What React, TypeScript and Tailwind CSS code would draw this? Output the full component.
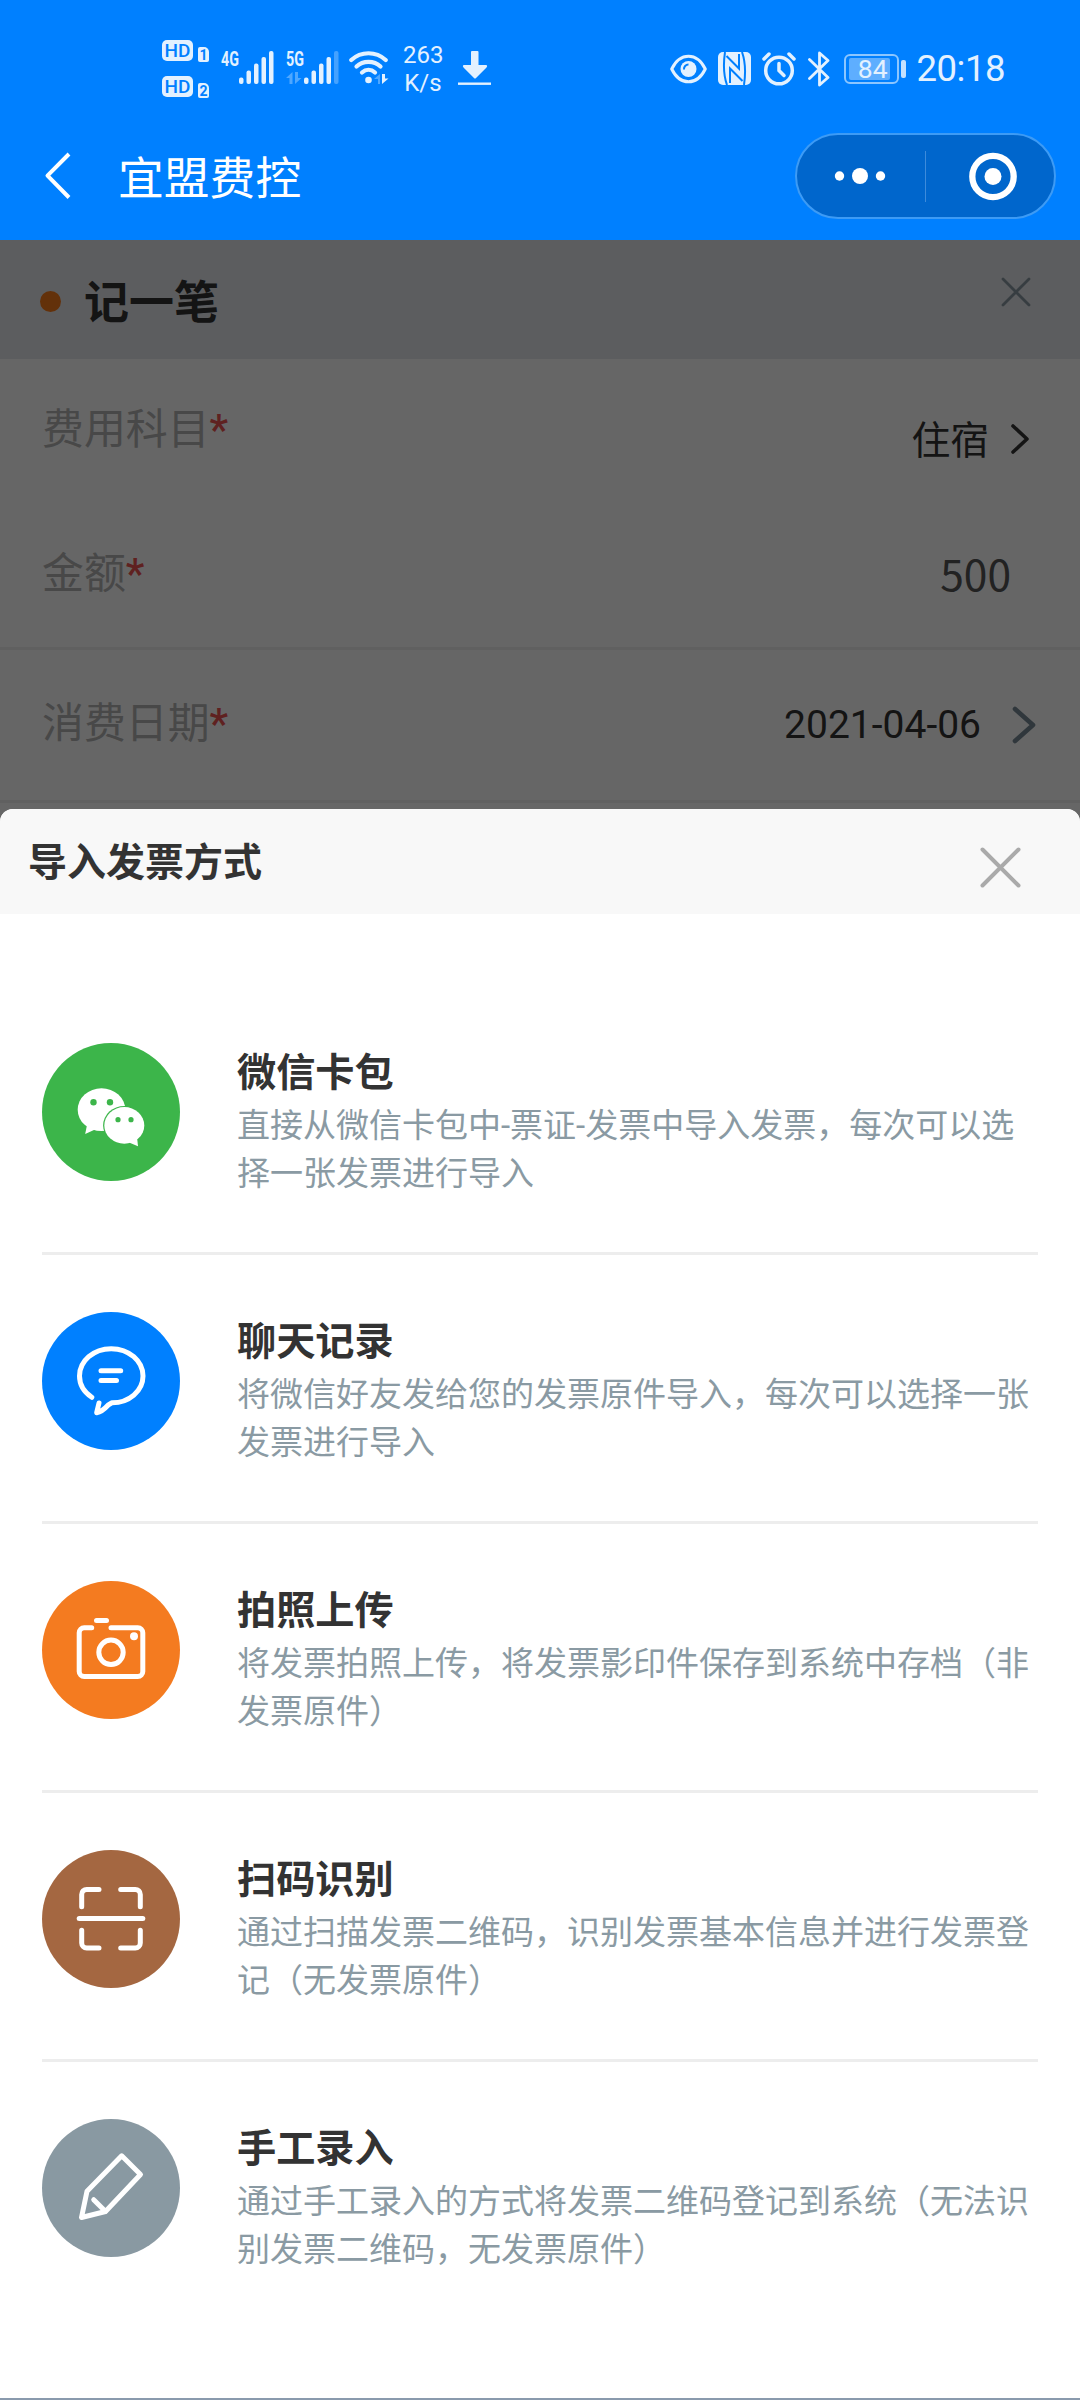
import type { ReactNode } from "react";

const textFont = "font-['Noto_Sans_CJK_SC',sans-serif]";
const numberFont = "font-['Roboto','Noto_Sans_CJK_SC',sans-serif]";

type ImportWay = {
  title: string;
  lines: string[];
  color: string;
  icon: ReactNode;
};

const importWays: ImportWay[] = [
  {
    title: "微信卡包",
    lines: ["直接从微信卡包中-票证-发票中导入发票，每次可以选", "择一张发票进行导入"],
    color: "bg-[#3cb54a]",
    icon: (
      <>
        <g fill="#fff" stroke="none">
          <ellipse cx="59.5" cy="66.7" rx="23.8" ry="21.4" />
          <path d="M45 82L43.2 91L53 86.5Z" />
        </g>
        <ellipse cx="82.3" cy="82.4" rx="21.2" ry="19.5" fill="#3cb54a" stroke="none" />
        <g fill="#fff" stroke="none">
          <ellipse cx="82.3" cy="82.4" rx="20" ry="18.3" />
          <path d="M95 94L96 103.2L87 99.5Z" />
        </g>
        <g fill="#3cb54a" stroke="none">
          <circle cx="51.5" cy="59.3" r="3.2" />
          <circle cx="68" cy="59.3" r="3.2" />
          <circle cx="76" cy="76.7" r="2.6" />
          <circle cx="89" cy="76.7" r="2.6" />
        </g>
      </>
    ),
  },
  {
    title: "聊天记录",
    lines: ["将微信好友发给您的发票原件导入，每次可以选择一张", "发票进行导入"],
    color: "bg-[#0080ff]",
    icon: (
      <>
        <path d="M49.8 85.3C42 80 37.5 72.5 37.5 64C37.5 49 51.5 36.7 69.2 36.7S101 49 101 64S87 91 69.7 90.8L66 93.2C62.5 97 58.5 100 54.7 100.7L57 91" />
        <path d="M59 58.7H78.7M59 68.4H74.5" />
      </>
    ),
  },
  {
    title: "拍照上传",
    lines: ["将发票拍照上传，将发票影印件保存到系统中存档（非", "发票原件）"],
    color: "bg-[#f47b20]",
    icon: (
      <>
        <path d="M49.7 46.7H42.2A5 5 0 0 0 37.2 51.7V90.5A5 5 0 0 0 42.2 95.5H95.8A5 5 0 0 0 100.8 90.5V51.7A5 5 0 0 0 95.8 46.7H69" />
        <path d="M54.5 39.4H64.5" />
        <circle cx="69" cy="71.3" r="12.2" />
        <circle cx="92" cy="55.3" r="4" fill="#fff" stroke="none" />
      </>
    ),
  },
  {
    title: "扫码识别",
    lines: ["通过扫描发票二维码，识别发票基本信息并进行发票登", "记（无发票原件）"],
    color: "bg-[#a46741]",
    icon: (
      <>
        <path d="M57 39.4H44.7A5 5 0 0 0 39.7 44.4V56.7M78.7 39.4H93.3A5 5 0 0 1 98.3 44.4V56.7" />
        <path d="M37.2 68.5H100.8" />
        <path d="M39.7 80.3V93A5 5 0 0 0 44.7 98H57M98.3 80.3V93A5 5 0 0 1 93.3 98H78.7" />
      </>
    ),
  },
  {
    title: "手工录入",
    lines: ["通过手工录入的方式将发票二维码登记到系统（无法识", "别发票二维码，无发票原件）"],
    color: "bg-[#8999a2]",
    icon: (
      <>
        <path d="M79.7 36.8L98.5 55.5L63.5 92.5L39.5 98.5L45 72.3Z" />
        <path d="M51.7 80.7L63.3 92.3" />
      </>
    ),
  },
];

const HdBadge = ({ sim }: { sim: string }) => (
  <div className="flex h-[21px] items-end gap-[5px]">
    <span className="flex h-[21px] w-[31px] items-center justify-center rounded-[5px] bg-[#e3f1ff] text-[19px] leading-none font-medium text-[#0080ff]">
      HD
    </span>
    <span className="-mb-px flex h-[15px] w-[11px] items-center justify-center rounded-[2px] rounded-tr-[5px] bg-[#e3f1ff] text-[14px] leading-none font-bold text-[#0080ff]">
      {sim}
    </span>
  </div>
);

const SignalBars = ({ weak = false }: { weak?: boolean }) => (
  <svg width="35" height="33" viewBox="0 0 35 33" fill="#e3f1ff">
    <rect x="0" y="26.5" width="4.5" height="6.5" rx="2" />
    <rect x="7.5" y="19.5" width="4.5" height="13.5" rx="2" />
    <rect x="15" y="12.5" width="4.5" height="20.5" rx="2" />
    <rect x="22.5" y="6" width="4.5" height="27" rx="2" />
    <rect x="30" y="0" width="4.5" height="33" rx="2" opacity={weak ? 0.3 : 1} />
  </svg>
);

const StatusBar = () => (
  <div className="flex h-[113px] items-start justify-between pt-10 pr-[75px] pl-[162px] font-['Roboto',sans-serif] text-[#e3f1ff]">
    {/* network - start */}
    <div className="flex items-start">
      <div className="flex flex-col gap-[15px]">
        <HdBadge sim="1" />
        <HdBadge sim="2" />
      </div>

      <div className="mt-[11px] ml-3 flex">
        <span className="-mt-px w-[18px] origin-left scale-x-[0.68] text-[21px] leading-[18px] font-bold">
          4G
        </span>
        <SignalBars />
      </div>

      <div className="mt-[11px] ml-3 flex">
        <div className="-mt-px w-[18px]">
          <span className="block w-[18px] origin-left scale-x-[0.68] text-[21px] leading-[18px] font-bold">
            5G
          </span>
          <svg width="16" height="12" viewBox="0 0 16 12" className="mt-1 opacity-35" fill="#e3f1ff">
            <path d="M0 6L6.5 0V12H3.5V6ZM15.5 6L9 12V0H12V6Z" />
          </svg>
        </div>
        <SignalBars weak />
      </div>

      <svg width="40" height="33" viewBox="0 0 40 33" className="mt-[11px] ml-[10px]" fill="none" stroke="#e3f1ff" strokeWidth="4.2" strokeLinecap="round">
        <path d="M2.3 9C12 0 27 0 36.7 9" />
        <path d="M7.5 15.5C14 9.3 25 9.3 31.5 15.5" />
        <path d="M13 21.5C17 17.8 22 17.8 26 21.5" />
        <circle cx="19.5" cy="29" r="3.3" fill="#e3f1ff" stroke="none" />
        <path d="M25 28L31 23V33H29V28Z" fill="#e3f1ff" stroke="none" opacity=".35" />
        <path d="M33 23V33L39.5 27.5H36V23Z" fill="#e3f1ff" stroke="none" />
      </svg>

      <div className="mt-px ml-[14px] w-[40px] text-center text-[24px] leading-7">
        <div>263</div>
        <div>K/s</div>
      </div>

      <svg width="34" height="34" viewBox="0 0 34 34" className="mt-[11px] ml-[15px]" fill="#e3f1ff">
        <path d="M14 0H19.5Q20.5 0 20.5 1V14H28Q30 14.5 28.5 16.5L18 27Q17 28 16 27L5.5 16.5Q4 14.5 6 14H13V1Q13 0 14 0Z" />
        <rect x="0" y="31.5" width="33" height="2.4" />
      </svg>
    </div>
    {/* network - end */}

    {/* system - start */}
    <div className="mt-[11px] flex h-[35px] items-center">
      <svg width="37" height="30" viewBox="0 0 37 30" fill="none" stroke="#e3f1ff" strokeWidth="3">
        <path d="M1.7 15C10 -2 27 -2 35.3 15C27 32 10 32 1.7 15Z" strokeLinejoin="round" />
        <circle cx="18.5" cy="15" r="8" fill="#e3f1ff" stroke="none" />
        <path d="M14 15.5A4.5 4.5 0 0 1 18.5 10.5" stroke="#0080ff" strokeWidth="2" />
      </svg>

      <svg width="33" height="33" viewBox="0 0 33 33" className="ml-[11px]">
        <rect width="33" height="33" rx="5" fill="#e3f1ff" />
        <g fill="none" stroke="#0080ff" strokeWidth="2">
          <path d="M7 0C5.5 10 5.5 23 9 33M26 33C27.5 23 27.5 10 24 0" />
          <path d="M12 31V16.5L24.5 29" />
          <path d="M21 2V16.5L8.5 4" />
        </g>
      </svg>

      <svg width="34" height="34" viewBox="0 0 34 34" className="ml-[11px]" fill="none" stroke="#e3f1ff" strokeWidth="3.5" strokeLinecap="round">
        <circle cx="17" cy="18.5" r="13.3" />
        <path d="M17 11.5V18.5L22 23.5" />
        <path d="M2 7L7 2M32 7L27 2" />
      </svg>

      <svg width="22" height="36" viewBox="0 0 22 36" className="ml-[12px]" fill="none" stroke="#e3f1ff" strokeWidth="2.8" strokeLinecap="round" strokeLinejoin="round">
        <path d="M1.5 8.5L20 26.5L11.5 34V2L20 9.5L1.5 27.5" />
      </svg>

      <div className="ml-[14px] flex h-[30px] w-[55px] items-center rounded-[6px] border-2 border-[#8cc6ff] pl-[3px]">
        <div className="flex h-[22px] w-[41px] items-center justify-end rounded-[2px] bg-[#5eaeff] pt-px pr-[2px] text-[26.5px] leading-none">
          84
        </div>
      </div>
      <div className="ml-[2px] h-[18px] w-[5px] rounded-[2px] bg-[#c4e1ff]" />

      <span className="mt-px ml-[11px] text-[36.5px] leading-none tracking-[-0.5px]">20:18</span>
    </div>
    {/* system - end */}
  </div>
);

const NavBar = () => (
  <div className="flex h-[127px] items-start pr-6 pl-[44px]">
    <svg width="28" height="48" viewBox="0 0 28 48" className="mt-[39px]" fill="none" stroke="#fff" strokeWidth="4">
      <path d="M25 2L3.5 23.7L25 45.5" strokeLinejoin="round" />
    </svg>
    <h1 className="mt-[30px] ml-[46px] text-[45.8px] leading-[64px] text-white">宜盟费控</h1>

    {/* capsule */}
    <div className="mt-[20px] ml-auto flex h-[86px] w-[261px] items-center rounded-full border-2 border-[#3d9bf5] bg-[#0066cc]">
      <svg width="128" height="82" viewBox="0 0 128 82" fill="#fff">
        <circle cx="42.5" cy="41" r="4.7" />
        <circle cx="63" cy="41" r="8" />
        <circle cx="83.5" cy="41" r="4.7" />
      </svg>
      <div className="h-[51px] w-px bg-[#3d8bdb]" />
      <svg width="128" height="82" viewBox="0 0 128 82" fill="#fff">
        <circle cx="67" cy="41.5" r="20.7" fill="none" stroke="#fff" strokeWidth="6.3" />
        <circle cx="67" cy="41.5" r="8.5" />
      </svg>
    </div>
  </div>
);

const Label = ({ children }: { children: ReactNode }) => (
  <span className="text-[41.9px] leading-[60px] text-[#b3b3b3]">
    {children}
    <span className="font-['Roboto',sans-serif] leading-none font-medium text-[#ee5350]">*</span>
  </span>
);

const ExpenseForm = () => (
  <div className="bg-white text-[#333]">
    <div className="flex h-[119px] items-start bg-[#e6e8ed] pt-[28px] pr-[49px] pl-10">
      <span className="mt-[23px] h-[21px] w-[21px] rounded-full bg-[#f77a1a]" />
      <h2 className="ml-[23px] text-[45px] leading-[64px] font-bold">记一笔</h2>
      <svg width="30" height="30" viewBox="0 0 30 30" className="mt-[9px] ml-auto" fill="none" stroke="#8a9aa3" strokeWidth="2.8" strokeLinecap="round">
        <path d="M2 2L28 28M28 2L2 28" />
      </svg>
    </div>

    <div className="flex h-[145px] justify-between pt-[37px] pr-[50px] pl-[42px]">
      <Label>费用科目</Label>
      <div className="mt-[11px] flex h-[60px] items-center gap-[21px] text-[38.8px]">
        住宿
        <svg width="20" height="32" viewBox="0 0 20 32" className="mt-[3px]" fill="none" stroke="#333" strokeWidth="3.6" strokeLinecap="round" strokeLinejoin="round">
          <path d="M3 3L17 16L3 29" />
        </svg>
      </div>
    </div>

    <div className="flex h-[146px] justify-between border-b-3 border-[#f0f0f0] pt-[36px] pr-[69px] pl-[42px]">
      <Label>金额</Label>
      <span className="mt-[3px] text-[42.5px] leading-[60px] text-[#555]">500</span>
    </div>

    <div className="flex h-[153px] justify-between border-b-3 border-[#f0f0f0] pt-[40px] pr-[43px] pl-[42px]">
      <Label>消费日期</Label>
      <div className={`mt-[2px] flex h-[66px] items-center gap-[30px] text-[39px] ${numberFont}`}>
        2021-04-06
        <svg width="26" height="40" viewBox="0 0 26 40" fill="none" stroke="#788b96" strokeWidth="4.6" strokeLinecap="round" strokeLinejoin="round">
          <path d="M4 4L22 20L4 36" />
        </svg>
      </div>
    </div>
  </div>
);

const ImportSheet = () => (
  <div className="flex h-[1591px] flex-col overflow-hidden rounded-t-[13px] border-b-2 border-[#8a9aad] bg-white">
    <div className="flex h-[105px] shrink-0 items-start justify-between bg-[#f8f8f8] pt-[22px] pr-[59px] pl-[28px]">
      <h2 className="text-[39px] leading-[56px] font-bold text-[#333]">导入发票方式</h2>
      <svg width="41" height="41" viewBox="0 0 41 41" className="mt-[16px]" fill="none" stroke="#aaa" strokeWidth="4" strokeLinecap="round">
        <path d="M2.5 2.5L38.5 38.5M38.5 2.5L2.5 38.5" />
      </svg>
    </div>

    {/* List of import ways */}
    <ul className="px-[42px] pt-[72px]">
      {importWays.map((way) => (
        <li
          key={way.title}
          className="flex h-[269px] items-start gap-[57px] border-b-3 border-[#ededed] pt-[57px] last:border-b-0">
          <div className={`h-[138px] w-[138px] shrink-0 rounded-full ${way.color}`}>
            <svg width="138" height="138" viewBox="0 0 138 138" fill="none" stroke="#fff" strokeWidth="5" strokeLinecap="round" strokeLinejoin="round">
              {way.icon}
            </svg>
          </div>
          <div className="-mt-[2px]">
            <h3 className="text-[39.2px] leading-[56px] font-bold text-[#333]">{way.title}</h3>
            <div className={`mt-[5px] text-[33px] leading-[48px] whitespace-nowrap text-[#8a9aa3] ${numberFont}`}>
              {way.lines.map((line) => (
                <p key={line}>{line}</p>
              ))}
            </div>
          </div>
        </li>
      ))}
    </ul>
  </div>
);

const App = () => {
  return (
    <div className={`h-[2400px] w-[1080px] overflow-hidden bg-white ${textFont}`} lang="zh-CN">
      <header className="h-[240px] bg-[#0080ff]">
        <StatusBar />
        <NavBar />
      </header>

      <main className="relative h-[2160px]">
        <ExpenseForm />

        {/* dimmed backdrop with the bottom sheet */}
        <div className="absolute inset-0 flex flex-col justify-end bg-black/60">
          <ImportSheet />
        </div>
      </main>
    </div>
  );
};

export default App;
